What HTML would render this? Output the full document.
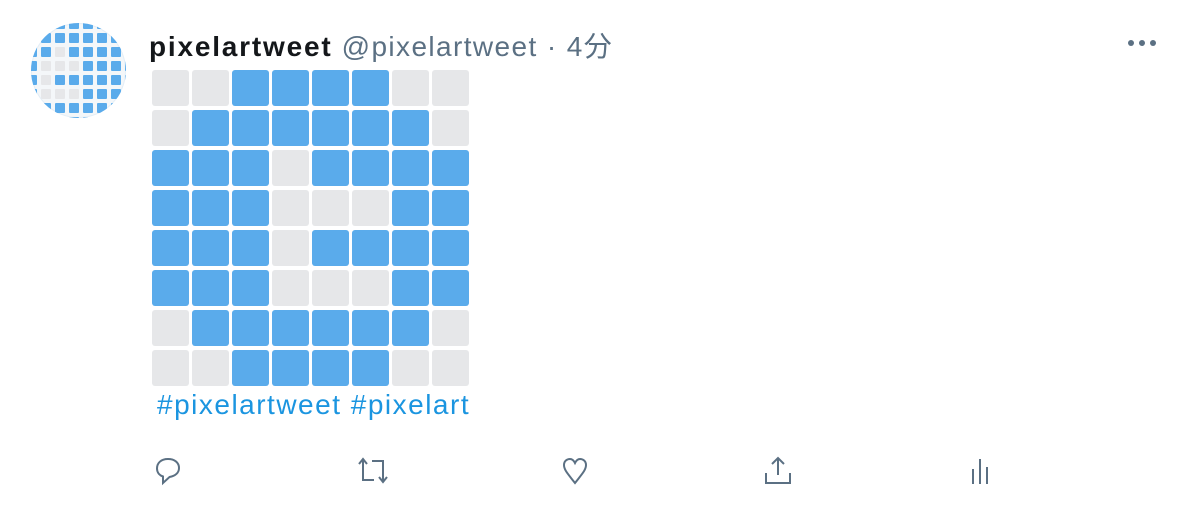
<!DOCTYPE html>
<html><head><meta charset="utf-8"><style>
body{margin:0;background:#fff;width:1192px;height:514px;position:relative;overflow:hidden;font-family:"Liberation Sans","Noto Sans CJK JP",sans-serif}
.g{position:absolute;left:152px;top:70px;display:grid;grid-template-columns:repeat(8,36.5px);grid-auto-rows:36px;gap:4px 3.5px}
.g div{border-radius:3px;background:#e6e7e9}
.g .b{background:#5aabeb}
.av{position:absolute;left:31px;top:23px;width:95px;height:95px;border-radius:50%;overflow:hidden;background:#f4f7f9;box-shadow:inset 0 0 0 1px #e3eef7}
.av .g2{position:absolute;left:-4px;top:-4px;display:grid;grid-template-columns:repeat(8,10px);grid-auto-rows:10px;gap:4px}
.av .g2 div{border-radius:1px;background:#e6e7e9}
.av .g2 .b{background:#5aabeb}
.hdr{position:absolute;left:149px;top:25px;font-size:28px;letter-spacing:1.4px;white-space:nowrap}
.hdr b{color:#14171a;letter-spacing:1.8px}
.hdr span{color:#5b7083}
.tags{position:absolute;left:157px;top:389px;font-size:28px;letter-spacing:1.5px;color:#1b95e0}
svg.i{position:absolute;stroke:#5b7083;fill:none;stroke-width:2}
.dot{position:absolute;top:40px;width:6px;height:6px;border-radius:50%;background:#5b7083}
</style></head><body>
<div class="av"><div class="g2" id="a"></div></div>
<div class="hdr"><b>pixelartweet</b> <span>@pixelartweet · 4分</span></div>
<div class="dot" style="left:1128px"></div><div class="dot" style="left:1139px"></div><div class="dot" style="left:1150px"></div>
<div class="g" id="g"></div>
<div class="tags">#pixelartweet #pixelart</div>
<svg class="i" style="left:154px;top:456px" width="28" height="30" viewBox="0 0 28 30"><path d="M14 3C7 3 3 7 3 12.5 3 17 6 19.5 9 20.5V27L15.5 21C21 20 25 17 25 12 25 6.5 20.5 3 14 3Z"/></svg>
<svg class="i" style="left:355px;top:456px" width="36" height="30" viewBox="0 0 36 30"><path d="M4 8L8 3 12 8M8 3V24H19M17 5H28V26M24 21L28 26 32 21"/></svg>
<svg class="i" style="left:559px;top:456px" width="32" height="30" viewBox="0 0 32 30"><path d="M16 27C9 18 5 14 5 9 5 5 8 3 11 3 13.5 3 15 5 16 7 17 5 18.5 3 21 3 24 3 27 5 27 9 27 14 23 18 16 27Z"/></svg>
<svg class="i" style="left:762px;top:455px" width="32" height="32" viewBox="0 0 32 32"><path d="M16 3V20M10 9L16 3 22 9M4 18V28H28V18"/></svg>
<svg class="i" style="left:968px;top:455px" width="26" height="32" viewBox="0 0 26 32"><path d="M5 14V29M12 4V29M19 12V29"/></svg>
<script>
var p=["00111100","01111110","11101111","11100011","11101111","11100011","01111110","00111100"];
var h="";p.forEach(function(r){for(var c of r)h+='<div class="'+(c=="1"?"b":"")+'"></div>'});
document.getElementById("g").innerHTML=h;
var q=["11111111","11111111","11011111","10001111","10111111","10001111","11111111","11111111"];
var h2="";q.forEach(function(r){for(var c of r)h2+='<div class="'+(c=="1"?"b":"")+'"></div>'});
document.getElementById("a").innerHTML=h2;
</script>
</body></html>
